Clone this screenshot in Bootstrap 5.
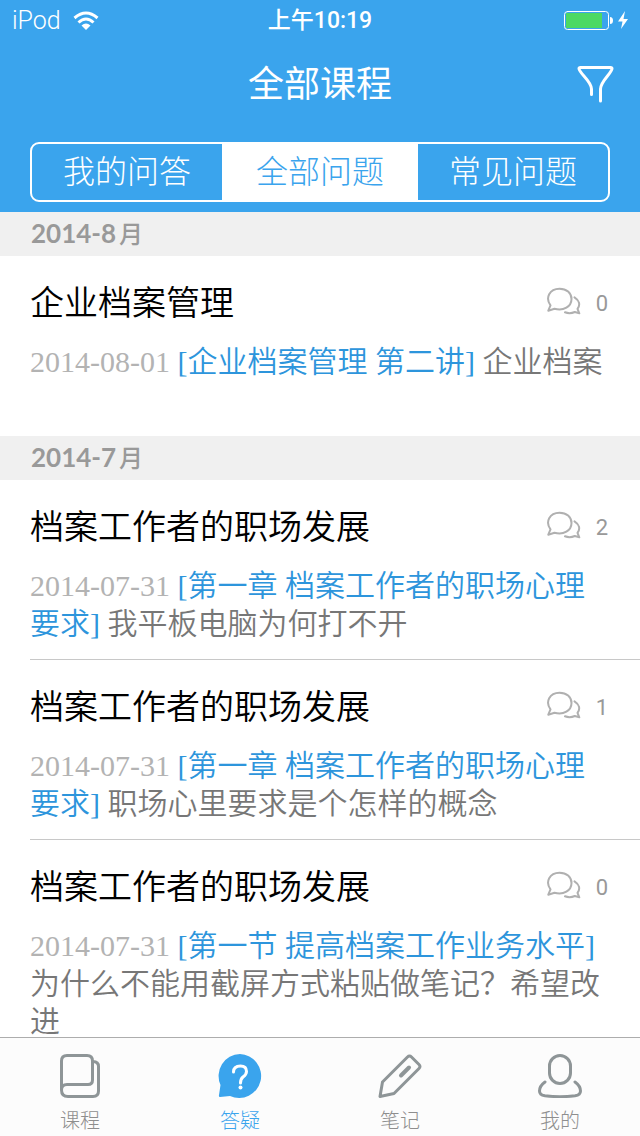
<!DOCTYPE html>
<html lang="zh-CN">
<head>
<meta charset="utf-8">
<meta name="viewport" content="width=device-width, initial-scale=1">
<title>全部课程</title>
<link href="https://cdn.jsdelivr.net/npm/bootstrap@5.3.0/dist/css/bootstrap.min.css" rel="stylesheet">
<style>
  :root { --brand: #3aa4ed; }
  body { font-family: Roboto, "Noto Sans CJK SC", sans-serif; font-weight: 350; color: #000; }
  .app-header { background: var(--brand); color: #fff; padding-bottom: 10px; }
  .status-bar { display: grid; grid-template-columns: 1fr auto 1fr; height: 42px; padding: 0 12px; font: 500 23px/42px Roboto, "Noto Sans CJK SC", sans-serif; }
  .status-bar .carrier { font-weight: 300; font-size: 25px; }
  .title-bar { display: grid; grid-template-columns: 1fr auto 1fr; height: 86px; padding: 0 24px; }
  .title-bar h1 { grid-column: 2; font-size: 36px; line-height: 40px; font-weight: 400; }
  .segments { margin: 14px 30px 0; border: 2px solid #fff; border-radius: 9px; overflow: hidden; }
  .segments .btn { --bs-btn-border-width: 0; --bs-btn-padding-y: 0; --bs-btn-border-radius: 0; --bs-btn-font-size: 32px; --bs-btn-line-height: 56px; --bs-btn-color: #fff; --bs-btn-active-bg: #fff; --bs-btn-active-color: var(--brand); font-weight: 300; }
  .segments .btn.active { flex: 0 0 34%; }
  .question-list { scrollbar-width: none; }
  .question-list::-webkit-scrollbar { display: none; }
  .month { height: 44px; background: #f0f0f0; color: #999; font: 700 26px/42px Lato, "Noto Sans CJK SC", sans-serif; padding-left: 31px; }
  .month span { font-size: 24px; font-weight: 500; margin-left: 3px; }
  .question { min-height: 180px; margin-left: 30px; padding: 27px 30px 16px 0; }
  .question:not(:last-child) { border-bottom: 1px solid #c8c8c8; }
  .question h3 { font-size: 34px; line-height: 40px; font-weight: 350; margin-bottom: 20px; }
  .replies { height: 40px; color: #999; font-size: 22px; font-weight: 400; gap: 15px; padding-right: 2px; }
  .replies svg { color: #b0b0b0; margin-bottom: 4px; }
  .question p { font-family: "Liberation Serif", "Noto Sans CJK SC", serif; font-size: 30px; line-height: 38px; color: #777; }
  .question time { color: #b3b3b3; }
  .question a { color: #2d95dc; text-decoration: none; }
  .tab-bar { height: 99px; background: #fcfcfc; border-top: 1px solid #adadad; }
  .tab-bar .nav-link { padding: 14px 0 0; color: #8e9597; font-size: 20px; line-height: 30px; font-weight: 300; }
  .tab-bar .nav-link span { color: #8e8e8e; margin-top: 8px; }
  .tab-bar .nav-link.active, .tab-bar .nav-link.active span { color: var(--brand); }
  svg { display: block; flex-shrink: 0; fill: none; stroke: currentColor; stroke-linecap: round; stroke-linejoin: round; }
</style>
</head>
<body>
<svg width="0" height="0" class="position-absolute" aria-hidden="true">
  <symbol id="chat" viewBox="0 0 35 28">
    <path d="M2.300 23.700L4.500 18.300C-1 11 3.500 1.700 13.500 1.700C20.500 1.700 25.500 6 25.500 12C25.500 19.500 17.500 24.500 8.500 21.800Z"/>
    <path d="M28.500 10.300C33.500 13.500 34.500 18 31.500 21.800L33.300 26.300L28.800 25C25.500 26.500 22 26.500 19 25.300"/>
  </symbol>
</svg>
<div class="d-flex flex-column vh-100">
  <header class="app-header flex-shrink-0">
    <div class="status-bar">
      <div class="carrier d-flex align-items-center gap-2">iPod
        <svg class="ms-1" width="26" height="20" viewBox="0 0 26 20" stroke-width="3" style="stroke-linecap:butt"><path d="M1.500 7Q13-3 24.500 7"/><path d="M5.500 11.500Q13 4.500 20.500 11.500"/><path d="M8.500 14.500Q13 10.500 17.500 14.500L13 19Z" fill="currentColor" stroke="none"/></svg>
      </div>
      <div class="clock">上午10:19</div>
      <div class="d-flex justify-content-end align-items-center">
        <svg width="64" height="20" viewBox="0 0 64 20" stroke-width="1"><rect x=".5" y=".5" width="44" height="18" rx="3"/><rect x="2" y="2" width="36" height="15" fill="#4cd964" stroke="none"/><path d="M46 6Q49 6 49 9.500Q49 13 46 13Z" fill="#fff" stroke="none"/><path d="M61 0L54 10.500H58.500L57 18L64 8H59.500Z" fill="#fff" stroke="none"/></svg>
      </div>
    </div>
    <div class="title-bar align-items-center">
      <h1 class="mb-0">全部课程</h1>
      <button type="button" class="btn btn-link text-white p-0 border-0 ms-auto" aria-label="筛选">
        <svg width="42" height="40" viewBox="0 0 42 40" stroke-width="3"><path d="M17.500 29.500V24C17.500 16 5 8 5 3.500Q5 2.500 6.500 2.500H36.500Q38 2.500 38 3.500C38 8 26.500 16 26.500 24V36"/></svg>
      </button>
    </div>
    <div class="segments row g-0">
      <button type="button" class="btn col">我的问答</button>
      <button type="button" class="btn col active" aria-pressed="true">全部问题</button>
      <button type="button" class="btn col">常见问题</button>
    </div>
  </header>

  <main class="question-list flex-grow-1 overflow-auto">
    <section>
      <h2 class="month mb-0">2014-8<span>月</span></h2>
      <article class="question">
        <div class="d-flex justify-content-between"><h3>企业档案管理</h3><div class="replies d-flex align-items-center"><svg width="35" height="28" stroke-width="2"><use href="#chat"/></svg>0</div></div>
        <p class="mb-0"><time datetime="2014-08-01">2014-08-01</time> <a href="#">[企业档案管理 第二讲]</a> 企业档案</p>
      </article>
    </section>
    <section>
      <h2 class="month mb-0">2014-7<span>月</span></h2>
      <article class="question">
        <div class="d-flex justify-content-between"><h3>档案工作者的职场发展</h3><div class="replies d-flex align-items-center"><svg width="35" height="28" stroke-width="2"><use href="#chat"/></svg>2</div></div>
        <p class="mb-0"><time datetime="2014-07-31">2014-07-31</time> <a href="#">[第一章 档案工作者的职场心理要求]</a> 我平板电脑为何打不开</p>
      </article>
      <article class="question">
        <div class="d-flex justify-content-between"><h3>档案工作者的职场发展</h3><div class="replies d-flex align-items-center"><svg width="35" height="28" stroke-width="2"><use href="#chat"/></svg>1</div></div>
        <p class="mb-0"><time datetime="2014-07-31">2014-07-31</time> <a href="#">[第一章 档案工作者的职场心理要求]</a> 职场心里要求是个怎样的概念</p>
      </article>
      <article class="question">
        <div class="d-flex justify-content-between"><h3>档案工作者的职场发展</h3><div class="replies d-flex align-items-center"><svg width="35" height="28" stroke-width="2"><use href="#chat"/></svg>0</div></div>
        <p class="mb-0"><time datetime="2014-07-31">2014-07-31</time> <a href="#">[第一节 提高档案工作业务水平]</a> 为什么不能用截屏方式粘贴做笔记？希望改进</p>
      </article>
    </section>
  </main>

  <nav class="tab-bar nav nav-justified flex-nowrap flex-shrink-0">
    <a class="nav-link d-flex flex-column align-items-center" href="#">
      <svg width="46" height="46" viewBox="0 0 46 46" stroke-width="3"><path d="M4.500 38V9Q4.500 3.500 10 3.500H30Q35.500 3.500 35.500 9V28Q35.500 32.500 31 32.500H10Q4.500 32.500 4.500 38Q4.500 44.500 11 44.500H36Q41.500 44.500 41.500 39V14.500Q41.500 9.500 36 9.500"/></svg>
      <span>课程</span>
    </a>
    <a class="nav-link active d-flex flex-column align-items-center" aria-current="page" href="#">
      <svg width="46" height="46" viewBox="0 0 46 46"><path d="M23 2A22 22 0 1 1 13 44L3 45Q1.500 45 2 43L3.500 33A22 22 0 0 1 23 2Z" fill="currentColor" stroke="none"/><path d="M16.500 20Q16.500 14 23.500 14Q29.500 14 29.500 19.500Q29.500 22.500 26 25Q23.500 27 23.500 31" stroke="#fff" stroke-width="3"/><circle cx="23.500" cy="35.500" r="2" fill="#fff" stroke="none"/></svg>
      <span>答疑</span>
    </a>
    <a class="nav-link d-flex flex-column align-items-center" href="#">
      <svg width="46" height="46" viewBox="0 0 46 46" stroke-width="3"><path d="M3 44.500L5.500 30L30.500 5Q32.500 3 34.500 5L42 12.500Q44 14.500 42 16.500L17 41.500Z"/><path d="M24 23.500L32 15.500" stroke-width="4"/></svg>
      <span>笔记</span>
    </a>
    <a class="nav-link d-flex flex-column align-items-center" href="#">
      <svg width="46" height="46" viewBox="0 0 46 46" stroke-width="3"><rect x="12.500" y="3.500" width="21" height="28" rx="10.500"/><path d="M8 30Q2.500 34 2.500 39Q2.500 43 8 43.800Q23 45.500 38 43.800Q43.500 43 43.500 39Q43.500 34 38 30"/></svg>
      <span>我的</span>
    </a>
  </nav>
</div>
<script src="https://cdn.jsdelivr.net/npm/bootstrap@5.3.0/dist/js/bootstrap.bundle.min.js"></script>
</body>
</html>
